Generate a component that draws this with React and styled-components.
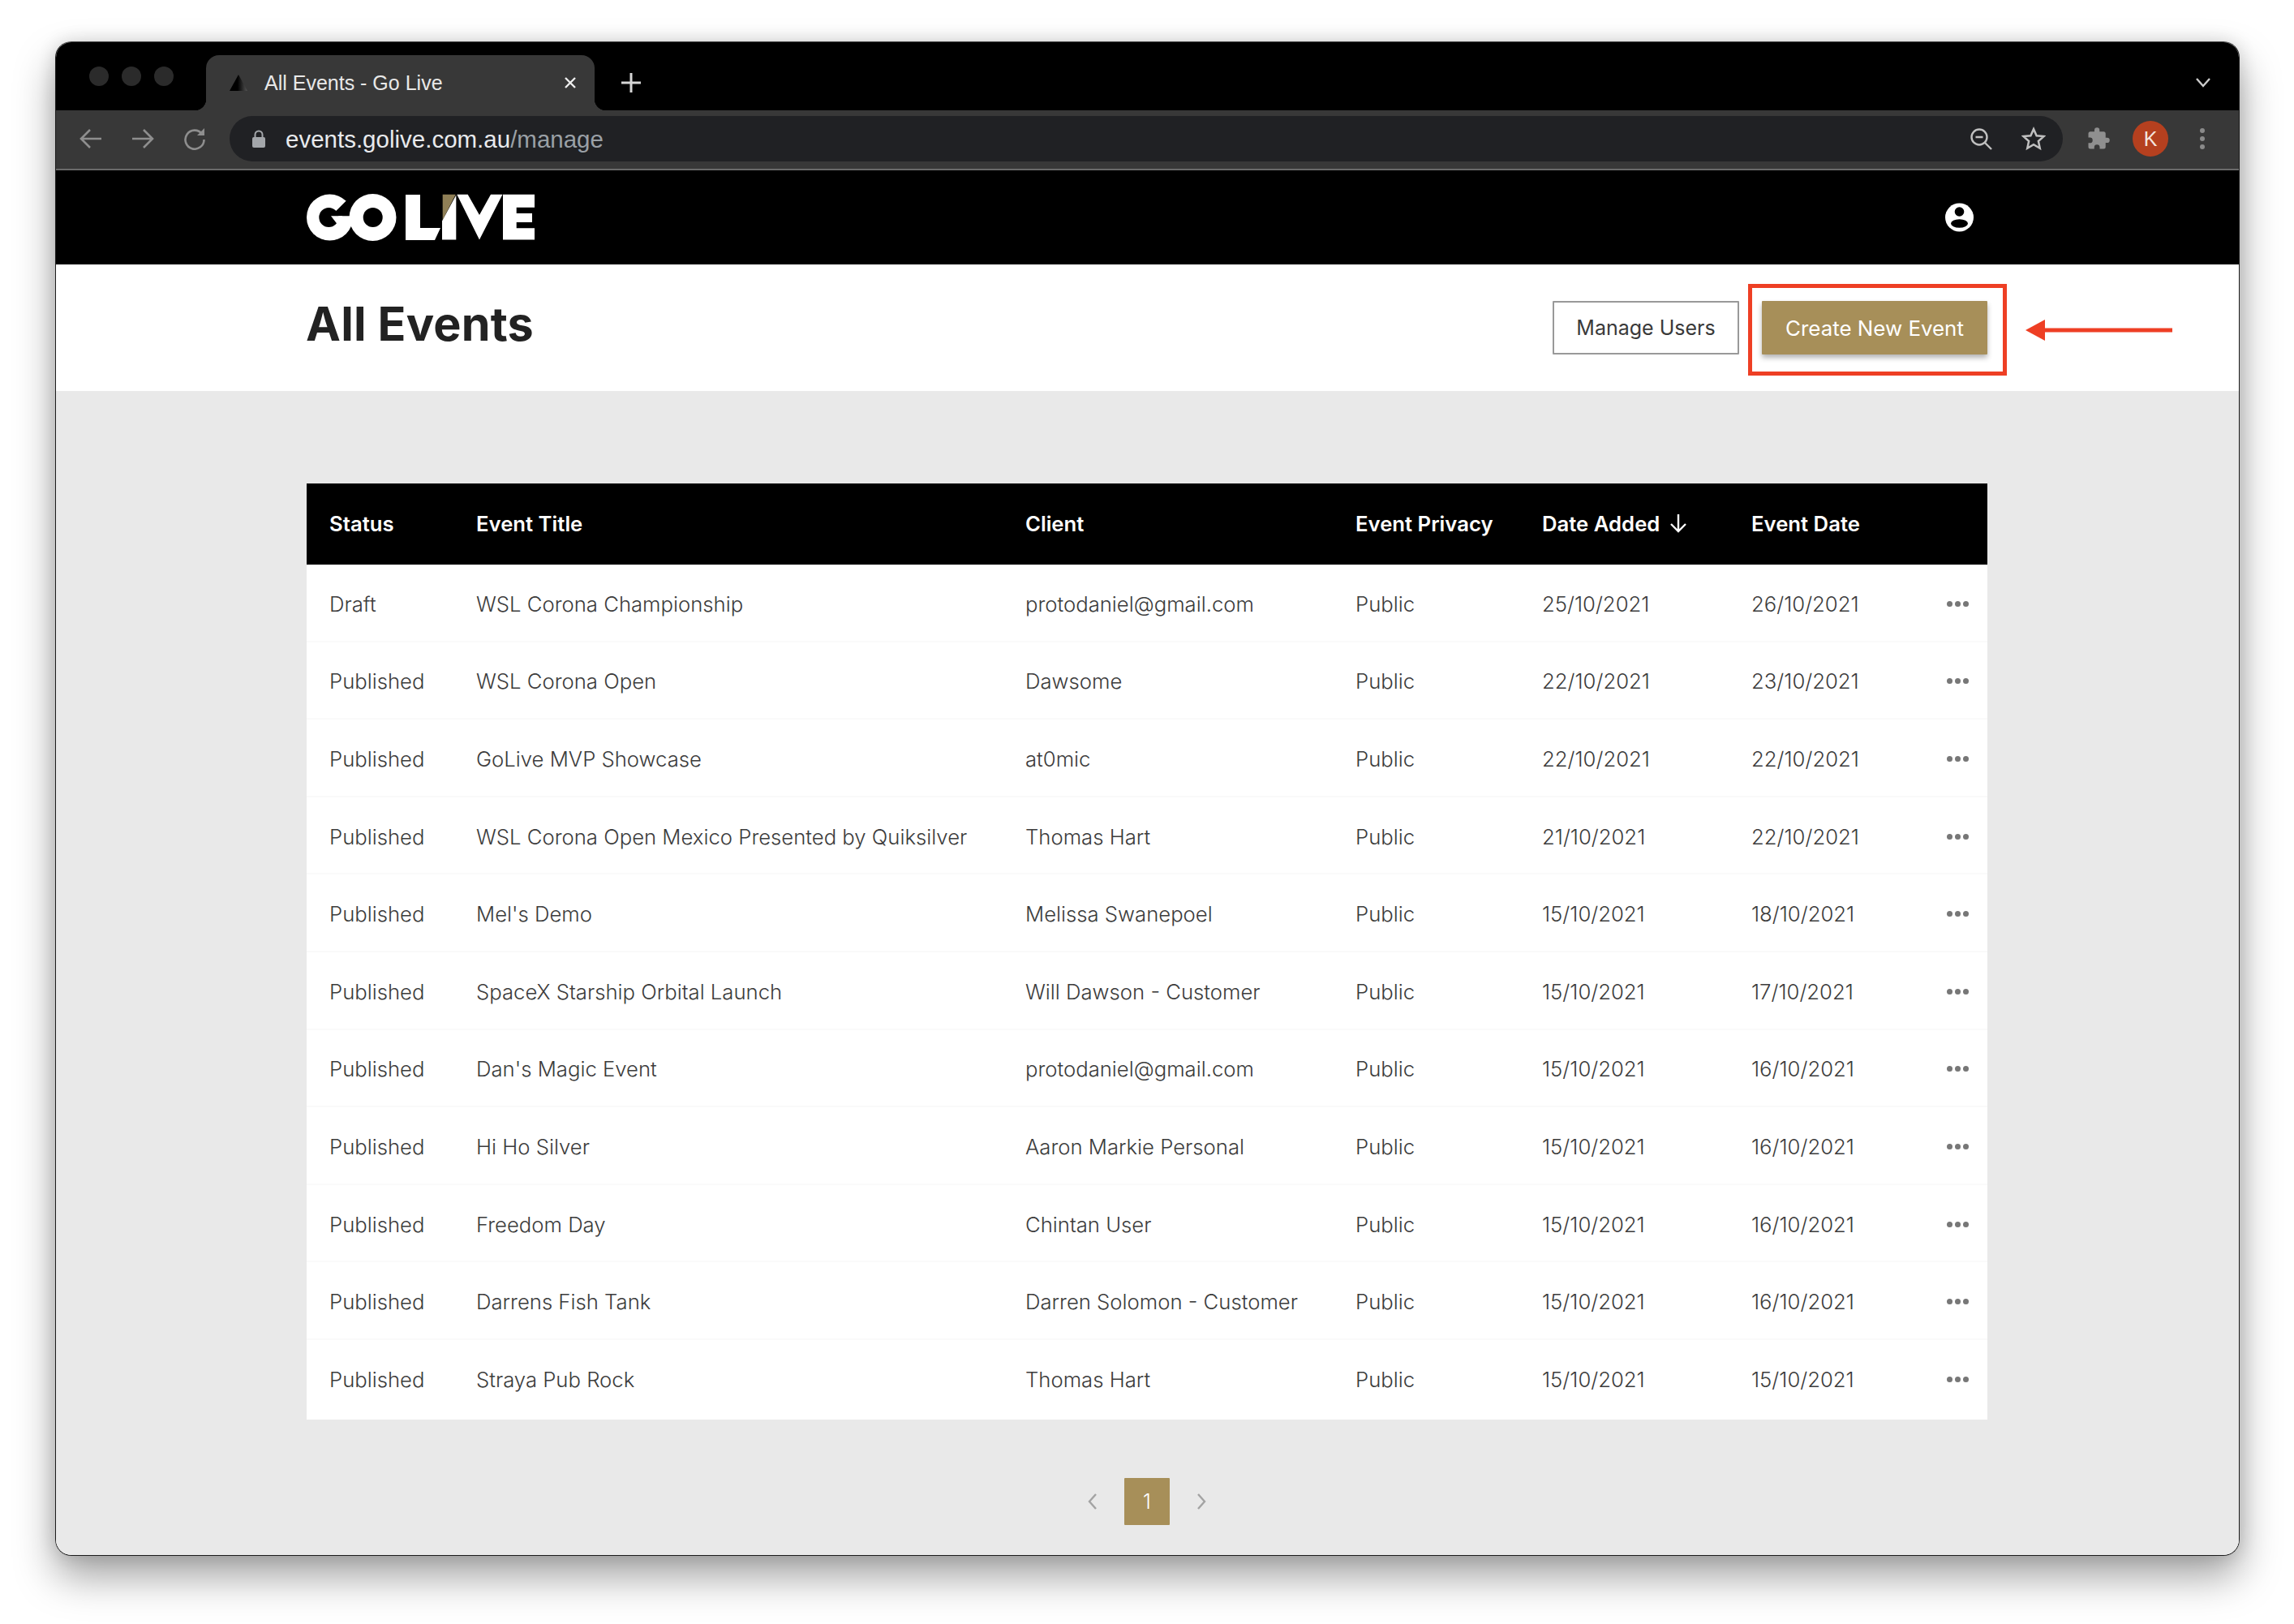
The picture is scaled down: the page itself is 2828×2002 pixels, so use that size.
import React from "react";
import styled, { createGlobalStyle } from "styled-components";

const GlobalStyle = createGlobalStyle`
  html, body { margin: 0; padding: 0; background: #fff; }
  body { font-family: Inter, "Liberation Sans", sans-serif; }
  * { box-sizing: border-box; }
`;

const Stage = styled.div`
  width: 2828px;
  height: 2002px;
  padding: 51px 0 0 68px;
  overflow: hidden;
`;

const Win = styled.div`
  width: 2693px;
  height: 1867px;
  display: flex;
  flex-direction: column;
  border-radius: 20px;
  overflow: hidden;
  border: 1.5px solid #1c1c1c;
  border-top-color: #4a4a4a;
  box-shadow: 0 26px 50px rgba(0, 0, 0, 0.36), 0 0 22px rgba(0, 0, 0, 0.14);
`;

const TabStrip = styled.div`
  height: 84px;
  flex: none;
  background: #000;
  display: flex;
  align-items: center;
  padding: 0 34px 0 41px;
`;

const Lights = styled.div`
  display: flex;
  gap: 16px;
`;

const Light = styled.span`
  width: 24px;
  height: 24px;
  border-radius: 50%;
  background: #2b2b2b;
`;

const Tab = styled.div`
  position: relative;
  align-self: flex-end;
  margin-left: 40px;
  width: 479px;
  height: 68px;
  padding: 0 22px 0 28px;
  background: #383838;
  border-radius: 16px 16px 0 0;
  display: flex;
  align-items: center;
  color: #e8e8e8;
  font-family: "Liberation Sans", Arial, sans-serif;
  font-size: 25px;
  &::before,
  &::after {
    content: "";
    position: absolute;
    bottom: 0;
    width: 14px;
    height: 14px;
  }
  &::before {
    left: -14px;
    background: radial-gradient(circle at 0 0, #000 14px, #383838 14.5px);
  }
  &::after {
    right: -14px;
    background: radial-gradient(circle at 100% 0, #000 14px, #383838 14.5px);
  }
`;

const TabTitle = styled.span`
  margin-left: 20px;
  flex: 1;
`;

const PlusIcon = styled.svg`
  flex: none;
  margin: 16px 0 0 33px;
`;

const ListIcon = styled.svg`
  flex: none;
  margin: 16px 0 0 auto;
`;

const Toolbar = styled.div`
  height: 74px;
  flex: none;
  background: #383838;
  border-bottom: 2px solid #6a6a6a;
  display: flex;
  align-items: center;
  padding: 0 32px 2px 29px;
`;

const NavGroup = styled.div`
  display: flex;
  align-items: center;
  gap: 36px;
`;

const Omnibox = styled.div`
  margin-left: 29px;
  width: 2260px;
  height: 56px;
  border-radius: 28px;
  background: #202124;
  display: flex;
  align-items: center;
  padding: 0 21px 0 27px;
`;

const Url = styled.span`
  margin-left: 24px;
  padding-top: 2px;
  flex: 1;
  font-family: "Liberation Sans", Arial, sans-serif;
  font-size: 29.5px;
  color: #e8eaed;
`;

const UrlPath = styled.span`
  color: #9aa0a6;
`;

const StarIcon = styled.svg`
  margin-left: 36px;
`;

const PuzzleIcon = styled.svg`
  margin-left: 29px;
`;

const Avatar = styled.span`
  width: 44px;
  height: 44px;
  margin-left: 27px;
  border-radius: 50%;
  background: #b5401f;
  color: #f4e5df;
  font-family: "Liberation Sans", Arial, sans-serif;
  font-size: 25px;
  display: flex;
  align-items: center;
  justify-content: center;
`;

const KebabIcon = styled.svg`
  margin-left: 38px;
`;

const SiteNav = styled.div`
  height: 116px;
  flex: none;
  background: #000;
  display: flex;
  align-items: center;
  justify-content: space-between;
  padding: 0 327px 0 309px;
`;

const PageHead = styled.div`
  height: 156px;
  flex: none;
  background: #fff;
  display: flex;
  align-items: center;
  justify-content: space-between;
  padding: 0 310px 0 309px;
`;

const Title = styled.h1`
  margin: 0 0 10px -1px;
  font-size: 57.5px;
  font-weight: 700;
  color: #222;
  letter-spacing: 0.2px;
`;

const Actions = styled.div`
  display: flex;
  gap: 28px;
`;

const Button = styled.button`
  height: 66px;
  width: ${(p) => p.$w}px;
  padding: 0;
  border: ${(p) => (p.$gold ? "none" : "2px solid #999")};
  background: ${(p) => (p.$gold ? "#a78f59" : "#fff")};
  color: ${(p) => (p.$gold ? "#fff" : "#3a3a3a")};
  box-shadow: ${(p) => (p.$gold ? "0 4px 6px rgba(0,0,0,0.3)" : "none")};
  border-radius: 1px;
  font-family: Inter, sans-serif;
  font-size: ${(p) => (p.$gold ? 25.9 : 25)}px;
  font-weight: 400;
`;

const Spotlight = styled.div`
  position: relative;
`;

const RedBox = styled.span`
  position: absolute;
  left: -17px;
  top: -21px;
  right: -24px;
  bottom: -26px;
  border: 5px solid #ee3f24;
  pointer-events: none;
`;

const RedArrow = styled.svg`
  position: absolute;
  top: 23px;
  left: 325px;
`;

const Main = styled.div`
  flex: 1;
  background: #e9e9e9;
  padding: 114px 310px 0 309px;
`;

const Table = styled.div`
  background: #fff;
`;

const COLUMNS = "209px 677px 407px 230px 258px 1fr 50px";

const HeadRow = styled.div`
  height: 100px;
  padding-bottom: 2px;
  background: #000;
  display: grid;
  grid-template-columns: ${COLUMNS};
  align-items: center;
  color: #fff;
  font-size: 25.7px;
  font-weight: 600;
`;

const Row = styled.div`
  height: 95.6px;
  padding-top: 3px;
  display: grid;
  grid-template-columns: ${COLUMNS};
  align-items: center;
  color: #3c3c3c;
  font-size: 25.7px;
  font-weight: 300;
  border-bottom: 2px solid #fafafa;
  &:last-child {
    height: 98px;
    padding-top: 0;
    border-bottom: none;
  }
`;

const Cell = styled.div`
  padding-left: ${(p) => (p.$first ? 28 : 0)}px;
  white-space: nowrap;
  display: flex;
  align-items: center;
`;

const SortArrow = styled.svg`
  margin-left: 12px;
`;

const More = styled.div`
  display: flex;
  gap: 3px;
`;

const Dot = styled.span`
  width: 7px;
  height: 7px;
  border-radius: 50%;
  background: #777;
`;

const Pager = styled.div`
  margin-top: 72px;
  display: flex;
  justify-content: center;
  align-items: center;
  gap: 32px;
`;

const PageNumber = styled.span`
  width: 56px;
  height: 58px;
  border-radius: 1px;
  background: #a78f59;
  color: #fff;
  font-size: 25px;
  font-weight: 300;
  display: flex;
  align-items: center;
  justify-content: center;
`;

const rows = [
  ["Draft", "WSL Corona Championship", "protodaniel@gmail.com", "25/10/2021", "26/10/2021"],
  ["Published", "WSL Corona Open", "Dawsome", "22/10/2021", "23/10/2021"],
  ["Published", "GoLive MVP Showcase", "at0mic", "22/10/2021", "22/10/2021"],
  ["Published", "WSL Corona Open Mexico Presented by Quiksilver", "Thomas Hart", "21/10/2021", "22/10/2021"],
  ["Published", "Mel's Demo", "Melissa Swanepoel", "15/10/2021", "18/10/2021"],
  ["Published", "SpaceX Starship Orbital Launch", "Will Dawson - Customer", "15/10/2021", "17/10/2021"],
  ["Published", "Dan's Magic Event", "protodaniel@gmail.com", "15/10/2021", "16/10/2021"],
  ["Published", "Hi Ho Silver", "Aaron Markie Personal", "15/10/2021", "16/10/2021"],
  ["Published", "Freedom Day", "Chintan User", "15/10/2021", "16/10/2021"],
  ["Published", "Darrens Fish Tank", "Darren Solomon - Customer", "15/10/2021", "16/10/2021"],
  ["Published", "Straya Pub Rock", "Thomas Hart", "15/10/2021", "15/10/2021"],
];

const Logo = () => (
  <svg width="281" height="58" viewBox="0 0 281 58">
    <circle cx="28.5" cy="29" r="28.5" fill="#fff" />
    <polygon points="30,27.3 48.3,9 60.7,4 60.7,27.3" fill="#000" />
    <circle cx="27.3" cy="29" r="12" fill="#000" />
    <polygon points="30,27.3 37.3,36.7 44,36.7 44,27.3" fill="#fff" />
    <circle cx="81.5" cy="29" r="29" fill="#fff" />
    <circle cx="81.7" cy="29" r="12" fill="#000" />
    <polygon points="122,1 140,1 140,42 165,42 158,57 122,57" fill="#fff" />
    <polygon points="167.7,0.7 183.7,0.7 167.7,32.3" fill="#8f7f56" />
    <polygon points="184.3,1.5 184.3,56.5 167,56.5 167,33.5" fill="#fff" />
    <polygon points="185.3,0.7 198.7,0.7 213,26 227,0.7 241.5,0.7 213,56.5" fill="#fff" />
    <polygon points="242,0.7 281,0.7 281,16.7 258.7,16.7 258.7,24 278,24 278,35 258.7,35 258.7,42.3 281,42.3 281,56.5 242,56.5" fill="#fff" />
  </svg>
);

const Chevron = ({ left, color = "#a3a3a3" }) => (
  <svg width="14" height="22" viewBox="0 0 14 22" fill="none" stroke={color} strokeWidth="2.4">
    <path d={left ? "M11 2 L3 11 L11 20" : "M3 2 L11 11 L3 20"} />
  </svg>
);

export default function App() {
  return (
    <Stage>
      <GlobalStyle />
      <Win>
        <TabStrip>
          <Lights>
            <Light />
            <Light />
            <Light />
          </Lights>
          <Tab>
            <svg width="24" height="20" viewBox="0 0 24 20">
              <defs>
                <linearGradient id="favicon" x1="0" x2="1" y1="0" y2="0">
                  <stop offset="0.45" stopColor="#000" />
                  <stop offset="1" stopColor="#555" />
                </linearGradient>
              </defs>
              <polygon points="12,0 23,20 1,20" fill="url(#favicon)" />
            </svg>
            <TabTitle>All Events - Go Live</TabTitle>
            <svg width="16" height="16" viewBox="0 0 16 16" stroke="#eee" strokeWidth="2.4">
              <path d="M2 2 L14 14 M14 2 L2 14" />
            </svg>
          </Tab>
          <PlusIcon width="24" height="24" viewBox="0 0 24 24" stroke="#d6d6d6" strokeWidth="3">
            <path d="M12 0 V24 M0 12 H24" />
          </PlusIcon>
          <ListIcon width="20" height="12" viewBox="0 0 20 12" fill="none" stroke="#ccc" strokeWidth="2.4">
            <path d="M2 1 L10 10 L18 1" />
          </ListIcon>
        </TabStrip>
        <Toolbar>
          <NavGroup>
            <svg width="28" height="28" viewBox="0 0 28 28" fill="none" stroke="#8e8e8e" strokeWidth="2.6">
              <path d="M27 14 H2 M13 3 L2 14 L13 25" />
            </svg>
            <svg width="28" height="28" viewBox="0 0 28 28" fill="none" stroke="#8e8e8e" strokeWidth="2.6">
              <path d="M1 14 H26 M15 3 L26 14 L15 25" />
            </svg>
            <svg width="28" height="28" viewBox="0 0 28 28" fill="none" stroke="#8e8e8e" strokeWidth="2.6">
              <path d="M23 8 A11.5 11.5 0 1 0 25.5 15" />
              <polygon points="26,1 26,10 17,10" fill="#8e8e8e" stroke="none" />
            </svg>
          </NavGroup>
          <Omnibox>
            <svg width="18" height="24" viewBox="0 0 18 24">
              <path d="M4.5 10 V7 a4.5 4.5 0 0 1 9 0 V10" fill="none" stroke="#a3a6aa" strokeWidth="2" />
              <rect x="1" y="10" width="16" height="13" rx="2" fill="#a3a6aa" />
            </svg>
            <Url>
              events.golive.com.au<UrlPath>/manage</UrlPath>
            </Url>
            <svg width="28" height="28" viewBox="0 0 28 28" fill="none" stroke="#c0c0c0" strokeWidth="2.4">
              <circle cx="12" cy="12" r="9.5" />
              <path d="M7.5 12 H16.5 M19 19 L27 27" />
            </svg>
            <StarIcon width="30" height="30" viewBox="0 0 24 24" fill="none" stroke="#c0c0c0" strokeWidth="2">
              <path d="M12 2.5 L14.9 9 L22 9.7 L16.7 14.4 L18.2 21.4 L12 17.8 L5.8 21.4 L7.3 14.4 L2 9.7 L9.1 9 Z" />
            </StarIcon>
          </Omnibox>
          <PuzzleIcon width="30" height="30" viewBox="0 0 24 24" fill="#8f8f8f">
            <path d="M20.5 11H19V7a2 2 0 0 0-2-2h-4V3.5a2.5 2.5 0 0 0-5 0V5H4a2 2 0 0 0-2 2v3.8h1.5a2.7 2.7 0 0 1 0 5.4H2V20a2 2 0 0 0 2 2h3.8v-1.5a2.7 2.7 0 0 1 5.4 0V22H17a2 2 0 0 0 2-2v-4h1.5a2.5 2.5 0 0 0 0-5z" />
          </PuzzleIcon>
          <Avatar>K</Avatar>
          <KebabIcon width="8" height="28" viewBox="0 0 8 28" fill="#8a8a8a">
            <circle cx="4" cy="4" r="3" />
            <circle cx="4" cy="14" r="3" />
            <circle cx="4" cy="24" r="3" />
          </KebabIcon>
        </Toolbar>
        <SiteNav>
          <Logo />
          <svg width="35" height="36" viewBox="0 0 35 36">
            <circle cx="17.5" cy="18" r="17.5" fill="#fff" />
            <circle cx="17.5" cy="11" r="5.8" fill="#000" />
            <ellipse cx="17.5" cy="25.5" rx="10.5" ry="5.2" fill="#000" />
          </svg>
        </SiteNav>
        <PageHead>
          <Title>All Events</Title>
          <Actions>
            <Button $w={230}>Manage Users</Button>
            <Spotlight>
              <Button $gold $w={278}>Create New Event</Button>
              <RedBox />
              <RedArrow width="181" height="26" viewBox="0 0 181 26">
                <polygon points="0,13 24,0 24,26" fill="#ee3f24" />
                <rect x="20" y="10.5" width="161" height="5" fill="#ee3f24" />
              </RedArrow>
            </Spotlight>
          </Actions>
        </PageHead>
        <Main>
          <Table>
            <HeadRow>
              <Cell $first>Status</Cell>
              <Cell>Event Title</Cell>
              <Cell>Client</Cell>
              <Cell>Event Privacy</Cell>
              <Cell>
                Date Added
                <SortArrow width="22" height="24" viewBox="0 0 22 24" fill="none" stroke="#fff" strokeWidth="2.4">
                  <path d="M11 1 V22 M2 13 L11 22 L20 13" />
                </SortArrow>
              </Cell>
              <Cell>Event Date</Cell>
              <Cell />
            </HeadRow>
            {rows.map((r, i) => (
              <Row key={i}>
                <Cell $first>{r[0]}</Cell>
                <Cell>{r[1]}</Cell>
                <Cell>{r[2]}</Cell>
                <Cell>Public</Cell>
                <Cell>{r[3]}</Cell>
                <Cell>{r[4]}</Cell>
                <Cell>
                  <More>
                    <Dot />
                    <Dot />
                    <Dot />
                  </More>
                </Cell>
              </Row>
            ))}
          </Table>
          <Pager>
            <Chevron left />
            <PageNumber>1</PageNumber>
            <Chevron />
          </Pager>
        </Main>
      </Win>
    </Stage>
  );
}
